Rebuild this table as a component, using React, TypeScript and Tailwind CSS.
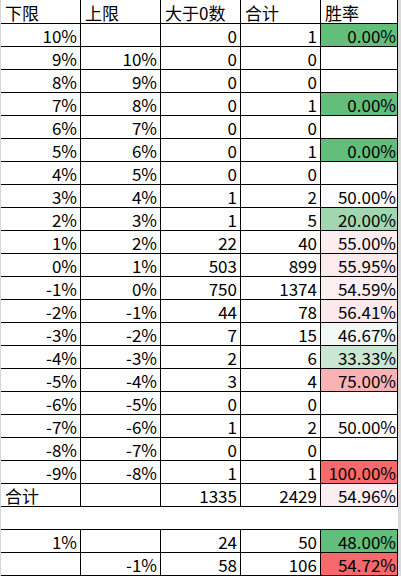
type Row = {
  lo: string;
  hi: string;
  n: string;
  total: string;
  rate: string;
  bg: string;
};

// 胜率列的色阶：0% 绿 → 50% 白 → 100% 红
const rows: Row[] = [
  { lo: "10%", hi: "", n: "0", total: "1", rate: "0.00%", bg: "bg-[#63be7b]" },
  { lo: "9%", hi: "10%", n: "0", total: "0", rate: "", bg: "bg-white" },
  { lo: "8%", hi: "9%", n: "0", total: "0", rate: "", bg: "bg-white" },
  { lo: "7%", hi: "8%", n: "0", total: "1", rate: "0.00%", bg: "bg-[#63be7b]" },
  { lo: "6%", hi: "7%", n: "0", total: "0", rate: "", bg: "bg-white" },
  { lo: "5%", hi: "6%", n: "0", total: "1", rate: "0.00%", bg: "bg-[#63be7b]" },
  { lo: "4%", hi: "5%", n: "0", total: "0", rate: "", bg: "bg-white" },
  { lo: "3%", hi: "4%", n: "1", total: "2", rate: "50.00%", bg: "bg-[#fcfcff]" },
  { lo: "2%", hi: "3%", n: "1", total: "5", rate: "20.00%", bg: "bg-[#a0d7b0]" },
  { lo: "1%", hi: "2%", n: "22", total: "40", rate: "55.00%", bg: "bg-[#fcedf0]" },
  { lo: "0%", hi: "1%", n: "503", total: "899", rate: "55.95%", bg: "bg-[#fceaed]" },
  { lo: "-1%", hi: "0%", n: "750", total: "1374", rate: "54.59%", bg: "bg-[#fceff1]" },
  { lo: "-2%", hi: "-1%", n: "44", total: "78", rate: "56.41%", bg: "bg-[#fce9ec]" },
  { lo: "-3%", hi: "-2%", n: "7", total: "15", rate: "46.67%", bg: "bg-[#f2f8f6]" },
  { lo: "-4%", hi: "-3%", n: "2", total: "6", rate: "33.33%", bg: "bg-[#c9e7d3]" },
  { lo: "-5%", hi: "-4%", n: "3", total: "4", rate: "75.00%", bg: "bg-[#fab3b5]" },
  { lo: "-6%", hi: "-5%", n: "0", total: "0", rate: "", bg: "bg-white" },
  { lo: "-7%", hi: "-6%", n: "1", total: "2", rate: "50.00%", bg: "bg-[#fcfcff]" },
  { lo: "-8%", hi: "-7%", n: "0", total: "0", rate: "", bg: "bg-white" },
  { lo: "-9%", hi: "-8%", n: "1", total: "1", rate: "100.00%", bg: "bg-[#f8696b]" },
];

const extra: Row[] = [
  { lo: "1%", hi: "", n: "24", total: "50", rate: "48.00%", bg: "bg-[#63be7b]" },
  { lo: "", hi: "-1%", n: "58", total: "106", rate: "54.72%", bg: "bg-[#f8696b]" },
];

const cell = "h-[23px] border-r border-b border-black flex items-end leading-[20px] whitespace-nowrap";
const num = `${cell} justify-end pr-[3px]`;
const label = `${cell} justify-start pl-[4px]`;
const head = "h-[24px] border-r border-b border-black flex items-end leading-[21px] whitespace-nowrap justify-start pl-[4px]";

function DataRow({ r }: { r: Row }) {
  return (
    <>
      <div className={num}>{r.lo}</div>
      <div className={num}>{r.hi}</div>
      <div className={num}>{r.n}</div>
      <div className={num}>{r.total}</div>
      <div className={`${cell} justify-end pr-[1px] ${r.bg}`}>{r.rate}</div>
    </>
  );
}

export default function App() {
  return (
    <div
      className="flex h-[576px] w-[401px] overflow-hidden bg-[#dadada] text-[17px] text-black"
      style={{ fontFamily: '"Noto Sans CJK SC", "Noto Sans", sans-serif' }}
    >
      <div className="w-[1px] shrink-0 bg-[#d4d4d4]" />
      <div className="grid w-[397px] shrink-0 grid-cols-[80px_80px_80px_80px_77px] content-start bg-white">
        <div className={head}>下限</div>
        <div className={head}>上限</div>
        <div className={head}>大于0数</div>
        <div className={head}>合计</div>
        <div className={head}>胜率</div>

        {rows.map((r, i) => (
          <DataRow key={i} r={r} />
        ))}

        <div className={label}>合计</div>
        <div className={num}></div>
        <div className={num}>1335</div>
        <div className={num}>2429</div>
        <div className={`${cell} justify-end pr-[1px] bg-[#fceef0]`}>54.96%</div>

        <div className="col-span-5 h-[23px] border-b border-black" />

        {extra.map((r, i) => (
          <DataRow key={i} r={r} />
        ))}
      </div>
    </div>
  );
}
